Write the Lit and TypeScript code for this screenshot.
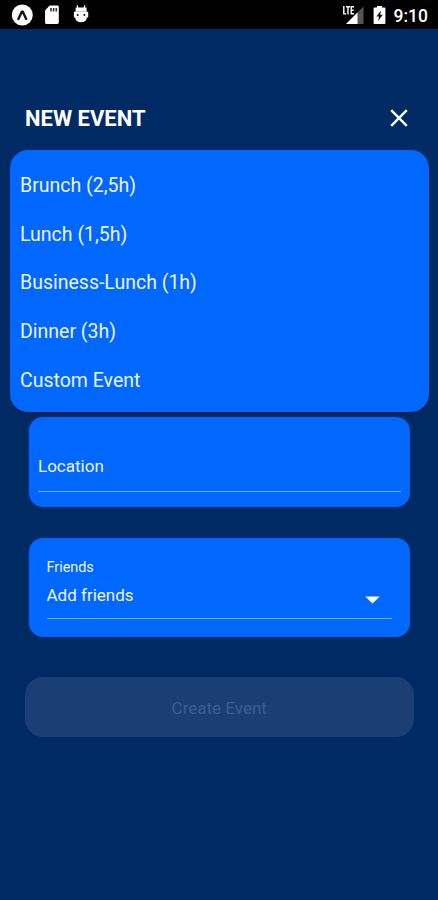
import { LitElement, html, css } from "lit";
import { customElement, property } from "lit/decorators.js";

@customElement("status-bar")
class StatusBar extends LitElement {
  static styles = css`
    :host {
      display: flex;
      box-sizing: border-box;
      height: 29px;
      align-items: center;
      background: #000;
      color: #fff;
      padding: 0 10px 0 11px;
    }
    .group { display: flex; align-items: center; height: 29px; }
    .left { flex: 1; }
    svg { display: block; }
    .card { margin-left: 11px; }
    .bug { margin-left: 14px; }
    .battery { margin-left: 9px; }
    .time { font-size: 17.5px; line-height: 29px; margin-left: 8px; padding-top: 3px; font-weight: 500; }
  `;
  render() {
    return html`
      <div class="group left">
        <svg width="23" height="29" viewBox="0 0 23 29">
          <circle cx="11.3" cy="15" r="10.5" fill="#fff" />
          <path d="M7.4 19 10.8 11.8h1L15.2 19" fill="none" stroke="#111" stroke-width="2.4" stroke-linecap="round" stroke-linejoin="round" />
        </svg>
        <svg class="card" width="14" height="29" viewBox="0 0 14 29">
          <path d="M4.6 5.6H12.4Q13.8 5.6 13.8 7V22.6Q13.8 24 12.4 24H1.2Q0 24 0 22.6V10.4Z" fill="#fff" />
          <path d="M6 8v3.4M8.6 8v3.4M11.3 8v3.4" stroke="#333" stroke-width="1.6" />
        </svg>
        <svg class="bug" width="16" height="29" viewBox="0 0 16 29">
          <path d="M4 5.2 4.9 8M12 5.2 11.1 8" stroke="#fff" stroke-width="1.2" />
          <path d="M2.6 7.6H13.6V11.8H15.2V17.4H13.8Q13.4 22.2 8 22.2T2.2 17.4H.9V11.8H2.6Z" fill="#fff" />
          <path d="M2.4 11.4H13.8" stroke="#aaa" stroke-width=".6" />
          <circle cx="4.7" cy="15" r="1" fill="#111" />
          <circle cx="11.4" cy="15" r="1" fill="#111" />
        </svg>
      </div>
      <div class="group">
        <svg width="23" height="29" viewBox="0 0 23 29">
          <path d="M22.5 6.5V24H5Z" fill="#555" />
          <path d="M16.5 12.5V24H5Z" fill="#fff" />
          <path d="M2.8 6v7.9h2.4M5 6.7h4M7 6.7V14.4M13 6.7H10.2V13.8H13M10.2 10.2H12.7" fill="none" stroke="#fff" stroke-width="1.4" />
        </svg>
        <svg class="battery" width="13" height="29" viewBox="0 0 13 29">
          <path d="M4 6H9V7.6H11.4Q12.4 7.6 12.4 8.6V23Q12.4 24 11.4 24H1.6Q.6 24 .6 23V8.6Q.6 7.6 1.6 7.6H4Z" fill="#fff" />
          <path d="M8 10.6 3.4 16.5H6L5.2 21 9.8 14.8H7.2Z" fill="#111" />
        </svg>
        <span class="time">9:10</span>
      </div>
    `;
  }
}

@customElement("line-field")
class LineField extends LitElement {
  @property() label = "";
  @property() value = "";
  @property({ type: Boolean }) dropdown = false;

  static styles = css`
    :host {
      display: flex;
      flex-direction: column;
      box-sizing: border-box;
      background: #0067ff;
      border-radius: 14px;
      color: #edf3ff;
    }
    .label { font-size: 14.4px; line-height: 18px; }
    .row {
      display: flex;
      align-items: center;
      justify-content: space-between;
      box-sizing: border-box;
      border-bottom: 1.5px solid #7badff;
      font-size: 17px;
    }
    .text { line-height: 24px; }
    .arrow { margin: 11px 12px 0 0; }
  `;
  render() {
    return html`
      ${this.label ? html`<div class="label">${this.label}</div>` : null}
      <div class="row" part="row">
        <span class="text">${this.value}</span>
        ${this.dropdown
          ? html`<svg class="arrow" width="15" height="8" viewBox="0 0 15 8"><path d="M.3.4H14.7L7.5 7.4Z" fill="#fff" /></svg>`
          : null}
      </div>
    `;
  }
}

@customElement("app-root")
class AppRoot extends LitElement {
  private events = ["Brunch (2,5h)", "Lunch (1,5h)", "Business-Lunch (1h)", "Dinner (3h)", "Custom Event"];

  static styles = css`
    :host {
      display: flex;
      flex-direction: column;
      height: 900px;
      background: #002a64;
      font-family: Roboto, sans-serif;
      overflow: hidden;
    }
    .header {
      display: flex;
      align-items: center;
      justify-content: space-between;
      height: 40px;
      margin: 69px 30px 0 25px;
      color: #fff;
    }
    .title { margin: 0; padding-top: 2px; font-size: 22px; line-height: 40px; font-weight: 700; }
    .close { display: block; }
    .options {
      list-style: none;
      box-sizing: border-box;
      height: 262px;
      margin: 12px 9.5px 0 10px;
      padding: 12px 10px 0;
      background: #0067ff;
      border-radius: 18px;
      box-shadow: 0 1px 2px rgba(0, 15, 50, 0.7);
      color: #edf3ff;
      font-size: 19.5px;
    }
    .option { height: 48.7px; line-height: 48.7px; }
    .location { height: 90px; margin: 4.5px 28px 0 28.5px; padding: 37px 9.5px 0; }
    .location::part(row) { height: 38px; align-items: flex-start; }
    .friends { height: 99px; margin: 31.5px 28px 0 28.5px; padding: 21px 18px 0; }
    .friends::part(row) { height: 42px; padding-bottom: 6px; }
    .create {
      height: 60px;
      margin: 40px 24.5px 0 25px;
      padding: 2px 0 0;
      border: 0;
      border-radius: 18px;
      background: #1b3f74;
      color: #3c5d91;
      font: 17px Roboto, sans-serif;
    }
  `;
  render() {
    return html`
      <status-bar></status-bar>
      <div class="header">
        <h1 class="title">NEW EVENT</h1>
        <svg class="close" width="18" height="18" viewBox="0 0 18 18">
          <path d="M1.2 1.2 16.8 16.8M16.8 1.2 1.2 16.8" stroke="#fff" stroke-width="2.4" />
        </svg>
      </div>
      <ul class="options">
        ${this.events.map((name) => html`<li class="option">${name}</li>`)}
      </ul>
      <line-field class="location" value="Location"></line-field>
      <line-field class="friends" label="Friends" value="Add friends" dropdown></line-field>
      <button class="create" disabled>Create Event</button>
    `;
  }
}
